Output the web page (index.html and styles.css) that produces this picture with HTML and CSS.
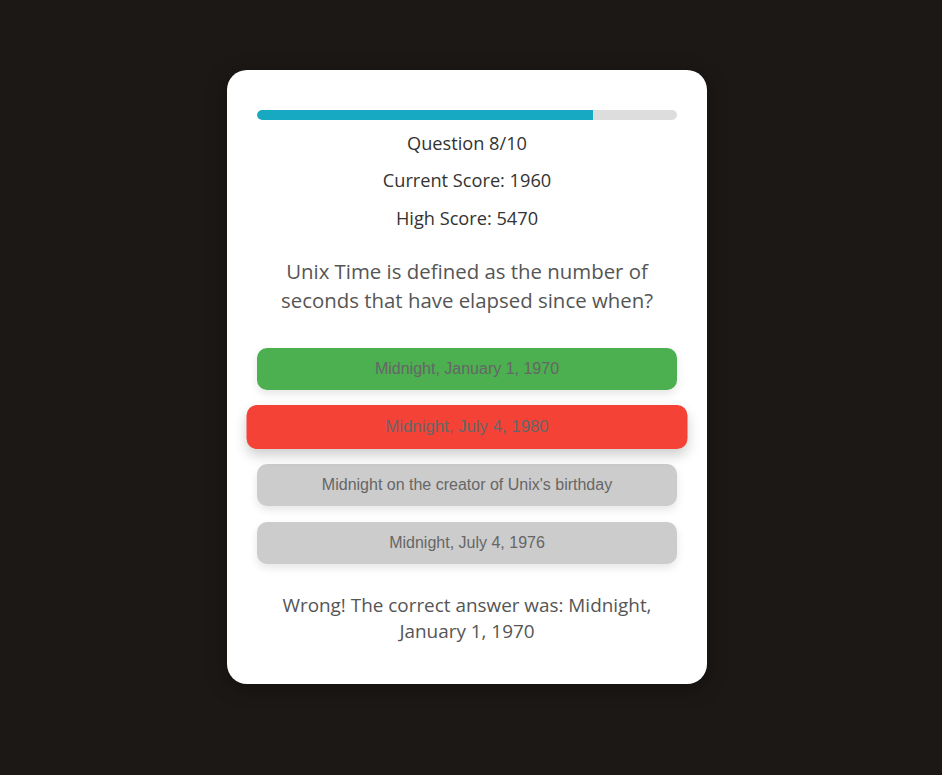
FILE: index.html
```html
<!DOCTYPE html>
<html lang="en">
<head>
<meta charset="utf-8">
<title>Quiz</title>
<link rel="stylesheet" href="styles.css">
</head>
<body>
<main class="card">
  <div class="progress"><div class="progress-fill" style="width: 80%"></div></div>
  <p class="stat stat-first">Question 8/10</p>
  <p class="stat">Current Score: 1960</p>
  <p class="stat">High Score: 5470</p>
  <h2 class="question">Unix Time is defined as the number of seconds that have elapsed since when?</h2>
  <div class="answers">
    <button class="answer correct">Midnight, January 1, 1970</button>
    <button class="answer wrong">Midnight, July 4, 1980</button>
    <button class="answer">Midnight on the creator of Unix's birthday</button>
    <button class="answer">Midnight, July 4, 1976</button>
  </div>
  <p class="feedback">Wrong! The correct answer was: Midnight, January 1, 1970</p>
</main>
</body>
</html>
```
FILE: styles.css
```css
html, body {
  margin: 0;
  padding: 0;
}
body {
  background: #1c1815;
  min-height: 775px;
  box-sizing: border-box;
  padding-right: 8px;
  display: flex;
  justify-content: center;
  align-items: flex-start;
  font-family: "Open Sans", "Noto Sans", sans-serif;
}
.card {
  margin-top: 70px;
  width: 480px;
  box-sizing: border-box;
  padding: 40px 30px 40px;
  background: #fff;
  border-radius: 20px;
  box-shadow: 0 4px 20px rgba(0, 0, 0, 0.35);
  display: flex;
  flex-direction: column;
  text-align: center;
}
.progress {
  height: 10px;
  background: #dddddd;
  border-radius: 5px;
  overflow: hidden;
}
.progress-fill {
  height: 100%;
  background: #17a9c2;
  border-radius: 5px 0 0 5px;
}
.stat {
  margin: 12.5px 0 0;
  font-size: 18.2px;
  line-height: 25px;
  color: #333;
}
.stat-first {
  margin-top: 10.5px;
}
.question {
  margin: 26px 0 0;
  font-size: 20.4px;
  font-weight: 400;
  line-height: 29px;
  color: #555;
  padding: 0;
}
.answers {
  margin-top: 33.5px;
  display: flex;
  flex-direction: column;
  gap: 16px;
}
.answer {
  height: 42px;
  border: none;
  border-radius: 10px;
  background: #cccccc;
  color: #666;
  font-family: "Liberation Sans", Arial, sans-serif;
  font-size: 16px;
  box-shadow: 0 4px 8px rgba(0, 0, 0, 0.1);
  padding: 0;
}
.answer.correct {
  background: #4caf50;
}
.answer.wrong {
  background: #f44336;
  transform: scale(1.05);
  box-shadow: 0 6px 12px rgba(0, 0, 0, 0.2);
}
.feedback {
  margin: 28px 0 0;
  font-size: 18.9px;
  line-height: 26px;
  color: #555;
  padding: 0 10px;
}
```
